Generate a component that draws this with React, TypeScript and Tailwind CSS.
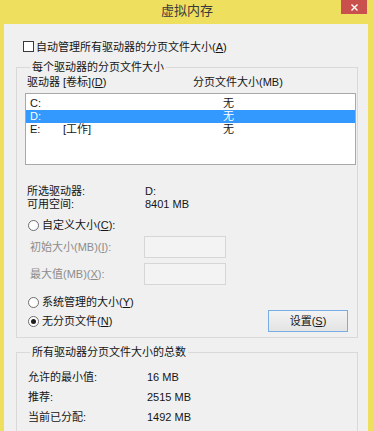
import React from 'react'

const Key = ({ k }: { k: string }) => <span className="underline underline-offset-[1px]">{k}</span>

const Radio = ({ checked, children }: { checked?: boolean; children: React.ReactNode }) => (
    <div className="flex items-center h-[12px] leading-[12px] ml-[3px]">
        <span className="w-[11px] h-[11px] rounded-full border border-[#6d6d6d] bg-white flex items-center justify-center mr-[3px] shrink-0">
            {checked && <span className="w-[5px] h-[5px] rounded-full bg-[#1e1e1e]"></span>}
        </span>
        <span>{children}</span>
    </div>
)

const drives = [
    { drive: 'C:', label: '', size: '无', selected: false },
    { drive: 'D:', label: '', size: '无', selected: true },
    { drive: 'E:', label: '[工作]', size: '无', selected: false },
]

const totals = [
    { label: '允许的最小值:', value: '16 MB' },
    { label: '推荐:', value: '2515 MB' },
    { label: '当前已分配:', value: '1492 MB' },
]

export default function App() {
    return (
        <div className="w-[374px] h-[431px] overflow-hidden bg-[#efdf5e] flex flex-col font-['Liberation_Sans','Noto_Sans_CJK_SC',sans-serif] text-[11px] text-[#151515]">
            {/* Title bar */}
            <div className="h-[24px] shrink-0 relative">
                <div className="text-center text-[13px] leading-[14px] pt-[4px] text-[#3a3a3a]">虚拟内存</div>
                <button className="absolute top-0 right-[7px] w-[26px] h-[14px] bg-[#c9504c] flex items-center justify-center">
                    <svg width="7" height="7" viewBox="0 0 7 7" fill="none" stroke="#ffffff" strokeWidth={1.4}>
                        <path d="M0.5 0.5l6 6M6.5 0.5l-6 6" />
                    </svg>
                </button>
            </div>

            {/* Dialog body */}
            <div className="flex-1 ml-[4px] mr-[6px] bg-[#f0f0f0] pl-[12px] pt-[17px]">
                <label className="flex items-center h-[11px] ml-[7px]">
                    <span className="w-[11px] h-[11px] border border-[#3a3a3a] bg-white shrink-0"></span>
                    <span className="ml-[2px] leading-[12px]">
                        自动管理所有驱动器的分页文件大小(<Key k="A" />)
                    </span>
                </label>

                {/* Per-drive group */}
                <fieldset className="mt-[9px] w-[342px] border border-[#d9d9d9] pl-[8px] pr-[1px] pb-[5px]">
                    <legend className="ml-[5px] px-[2px] leading-[13px]">每个驱动器的分页文件大小</legend>

                    <div className="mt-[2px] h-[12px] leading-[12px] flex">
                        <span className="w-[168px] pl-[2px]">
                            驱动器 [卷标](<Key k="D" />)
                        </span>
                        <span>分页文件大小(MB)</span>
                    </div>

                    <div className="mt-[5px] h-[72px] w-[331px] border border-[#a8a8a8] bg-white pt-[3px]">
                        {drives.map((d) => (
                            <div
                                key={d.drive}
                                className={`flex h-[13px] leading-[13px] pl-[4px] ${d.selected ? 'bg-[#3399ff] text-white' : ''}`}
                            >
                                <span className="w-[33px]">{d.drive}</span>
                                <span className="w-[160px]">{d.label}</span>
                                <span>{d.size}</span>
                            </div>
                        ))}
                    </div>

                    <div className="mt-[20px] flex h-[13px] leading-[13px]">
                        <span className="w-[120px] pl-[2px]">所选驱动器:</span>
                        <span>D:</span>
                    </div>
                    <div className="flex h-[13px] leading-[13px]">
                        <span className="w-[120px] pl-[2px]">可用空间:</span>
                        <span>8401 MB</span>
                    </div>

                    <div className="mt-[8px]">
                        <Radio>
                            自定义大小(<Key k="C" />):
                        </Radio>
                    </div>

                    <div className="mt-[5px] flex items-center h-[22px] text-[#8c8c8c]">
                        <span className="w-[119px] pl-[5px]">
                            初始大小(MB)(<Key k="I" />):
                        </span>
                        <span className="w-[82px] h-[22px] border border-[#d6d6d6] bg-[#f3f3f3]"></span>
                    </div>
                    <div className="mt-[5px] flex items-center h-[22px] text-[#8c8c8c]">
                        <span className="w-[119px] pl-[5px]">
                            最大值(MB)(<Key k="X" />):
                        </span>
                        <span className="w-[82px] h-[22px] border border-[#d6d6d6] bg-[#f3f3f3]"></span>
                    </div>

                    <div className="mt-[11px]">
                        <Radio>
                            系统管理的大小(<Key k="Y" />)
                        </Radio>
                    </div>

                    <div className="mt-[2px] h-[22px] flex items-center">
                        <Radio checked>
                            无分页文件(<Key k="N" />)
                        </Radio>
                        <button className="ml-auto mr-[8px] w-[80px] h-[22px] border border-[#78aee3] bg-gradient-to-b from-[#f3f3f3] to-[#e4e4e4] leading-[20px]">
                            设置(<Key k="S" />)
                        </button>
                    </div>
                </fieldset>

                {/* Totals group */}
                <fieldset className="mt-[8px] w-[342px] border border-[#d9d9d9] pl-[8px] pb-[12px]">
                    <legend className="ml-[5px] px-[2px] leading-[13px]">所有驱动器分页文件大小的总数</legend>
                    <div className="mt-[8px]">
                        {totals.map((t) => (
                            <div key={t.label} className="flex h-[20px] leading-[20px]">
                                <span className="w-[122px] pl-[3px]">{t.label}</span>
                                <span>{t.value}</span>
                            </div>
                        ))}
                    </div>
                </fieldset>
            </div>
        </div>
    )
}
